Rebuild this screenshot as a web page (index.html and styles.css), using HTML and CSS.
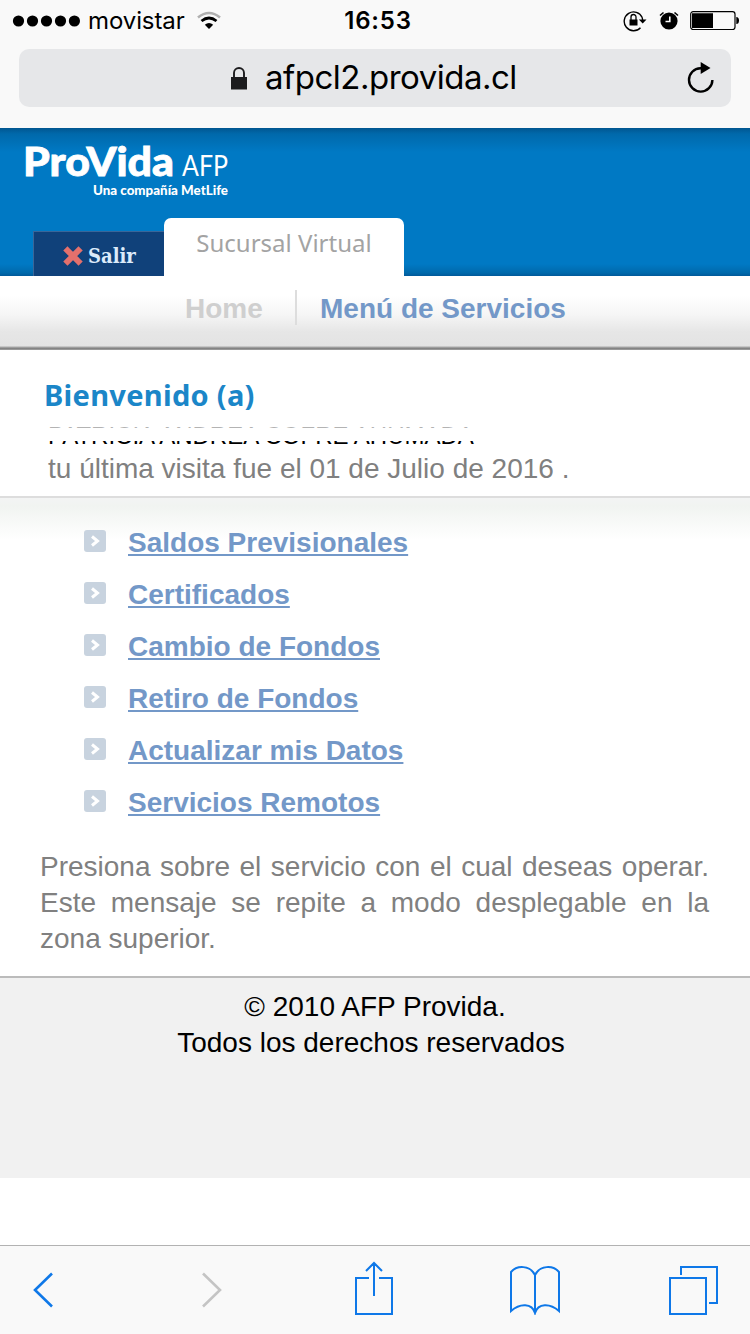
FILE: index.html
```html
<!DOCTYPE html>
<html lang="es">

<head>
    <meta charset="UTF-8">
    <meta name="viewport" content="width=device-width, initial-scale=1.0">
    <title>AFP Provida</title>
    <link rel="stylesheet" href="styles.css">
</head>

<body>

    <div class="browser-top">
        <div class="status-bar">
            <div class="status-left">
                <svg width="68" height="12" viewBox="0 0 68 12">
                    <circle cx="6.500" cy="6" r="5.600"/><circle cx="20.500" cy="6" r="5.600"/><circle cx="34.500" cy="6" r="5.600"/><circle cx="48.500" cy="6" r="5.600"/><circle cx="62.400" cy="6" r="5.600"/>
                </svg>
                <span class="carrier">movistar</span>
                <svg class="wifi" width="24" height="19" viewBox="0 0 24 19">
                    <path d="M1 6.500Q12-2.500 23 6.500" fill="none" stroke="#b0b0b0" stroke-width="2.600"/>
                    <path d="M4.500 10Q12 4 19.500 10" fill="none" stroke="#000" stroke-width="2.800"/>
                    <path d="M7.800 13.800Q12 10.200 16.200 13.800L12 18Z"/>
                </svg>
            </div>
            <div class="status-time">16:53</div>
            <div class="status-right">
                <svg width="25" height="22" viewBox="0 0 25 22">
                    <path d="M19.200 7.500A9.400 9.400 0 1 0 17.500 17.700M19.200 7.500L19.800 11" fill="none" stroke="#000" stroke-width="1.400"/>
                    <path d="M15.800 9.500H23.500L19.700 13.500ZM6.500 9.500H14.500V15.500H6.500Z"/>
                    <path d="M8 10V7A2.500 2.500 0 0 1 13 7V10" fill="none" stroke="#000" stroke-width="1.300"/>
                </svg>
                <svg width="20" height="20" viewBox="0 0 20 20">
                    <circle cx="10" cy="10" r="8.600"/>
                    <path d="M1 4.500L4.500 1.500M19 4.500L15.500 1.500" stroke="#000" stroke-width="1.600"/>
                    <path d="M10.800 5.500V10.500H6.500" fill="none" stroke="#fff" stroke-width="1.600"/>
                </svg>
                <svg width="50" height="20" viewBox="0 0 50 20">
                    <rect x="0.700" y="0.700" width="44.300" height="17.800" rx="2.500" fill="none" stroke="#000" stroke-width="1.200"/>
                    <path d="M2 2.200H23V17H2ZM46.300 6Q49 6 49 9.500Q49 13 46.300 13Z"/>
                </svg>
            </div>
        </div>
        <div class="address-bar">
            <svg class="lock" width="16" height="23" viewBox="0 0 16 23">
                <path d="M0 10H16V22.500H0Z" fill="#1c1c1e"/>
                <path d="M3 11V6A5 5 0 0 1 13 6V11" fill="none" stroke="#1c1c1e" stroke-width="1.900"/>
            </svg>
            <span class="url">afpcl2.provida.cl</span>
            <svg class="reload" width="28" height="32" viewBox="0 0 28 32">
                <path d="M17 6.200H13.500A11.700 11.700 0 1 0 25.400 18" fill="none" stroke="#000" stroke-width="2.400"/>
                <path d="M13.700 0L23.500 6L13.700 12Z"/>
            </svg>
        </div>
    </div>

    <header class="site-header">
        <svg class="logo" width="210" height="60" viewBox="0 0 210 60">
            <text class="logo-name" x="-1" y="36" textLength="151" lengthAdjust="spacingAndGlyphs">ProVida</text>
            <text class="logo-afp" x="158" y="36" textLength="46" lengthAdjust="spacingAndGlyphs">AFP</text>
            <text class="logo-sub" x="69" y="55" textLength="135" lengthAdjust="spacingAndGlyphs">Una compañía MetLife</text>
        </svg>
        <div class="tabs">
            <a class="tab-exit">
                <svg width="20" height="20" viewBox="0 0 20 20">
                    <path d="M4.500 4.500L15.500 15.500M15.500 4.500L4.500 15.500" stroke="#e4706c" stroke-width="6" stroke-linecap="square"/>
                </svg>
                <span>Salir</span>
            </a>
            <a class="tab-active">Sucursal Virtual</a>
        </div>
    </header>

    <nav class="menu">
        <span class="menu-home">Home</span>
        <span class="menu-services">Menú de Servicios</span>
    </nav>

    <section class="welcome">
        <h1>Bienvenido (a)</h1>
        <div class="name">PATRICIA ANDREA COFRE AHUMADA</div>
        <p>tu última visita fue el 01 de Julio de 2016 .</p>
    </section>

    <main class="content">
        <ul class="services">
            <li><svg viewBox="0 0 22 22"><rect width="22" height="22" rx="3"/><path d="M8 6.500L13.500 11L8 15.500"/></svg><a>Saldos Previsionales</a></li>
            <li><svg viewBox="0 0 22 22"><rect width="22" height="22" rx="3"/><path d="M8 6.500L13.500 11L8 15.500"/></svg><a>Certificados</a></li>
            <li><svg viewBox="0 0 22 22"><rect width="22" height="22" rx="3"/><path d="M8 6.500L13.500 11L8 15.500"/></svg><a>Cambio de Fondos</a></li>
            <li><svg viewBox="0 0 22 22"><rect width="22" height="22" rx="3"/><path d="M8 6.500L13.500 11L8 15.500"/></svg><a>Retiro de Fondos</a></li>
            <li><svg viewBox="0 0 22 22"><rect width="22" height="22" rx="3"/><path d="M8 6.500L13.500 11L8 15.500"/></svg><a>Actualizar mis Datos</a></li>
            <li><svg viewBox="0 0 22 22"><rect width="22" height="22" rx="3"/><path d="M8 6.500L13.500 11L8 15.500"/></svg><a>Servicios Remotos</a></li>
        </ul>
        <p class="help">Presiona sobre el servicio con el cual deseas operar. Este mensaje se repite a modo desplegable en la zona superior.</p>
    </main>

    <footer class="site-footer">
        <div>© 2010 AFP Provida.</div>
        <div class="rights">Todos los derechos reservados</div>
    </footer>

    <div class="toolbar">
        <svg class="back" width="20" height="36" viewBox="0 0 20 36"><path d="M19 1.500L2 18L19 34.500"/></svg>
        <svg class="forward" width="20" height="36" viewBox="0 0 20 36"><path d="M1 1.500L18 18L1 34.500"/></svg>
        <svg class="share" width="40" height="54" viewBox="0 0 40 54"><path d="M15 17H2V53H38V17H25M20 35V2.500M12 10L20 2L28 10"/></svg>
        <svg class="bookmarks" width="50" height="50" viewBox="0 0 50 50"><path d="M25 47V10C20 0 7 0 1 7V46C10 38 22 38 25 48C28 38 40 38 49 46V7C43 0 30 0 25 10"/></svg>
        <svg class="pages" width="50" height="50" viewBox="0 0 50 50"><path d="M1 13H37V49H1ZM12 10V2H48V38H40"/></svg>
    </div>

</body>

</html>
```
FILE: styles.css
```css
* {
    box-sizing: border-box;
}

body {
    margin: 0;
    height: 1334px;
    display: flex;
    flex-direction: column;
    background-color: #fff;
    font-family: "Liberation Sans", Arial, sans-serif;
    font-size: 28px;
    overflow: hidden;
}

svg {
    display: block;
    flex-shrink: 0;
}

h1, p, ul {
    margin: 0;
    padding: 0;
}

.browser-top {
    height: 128px;
    background-color: #f9f9f9;
    padding: 0 19px;
}

.status-bar {
    height: 49px;
    padding-bottom: 8px;
    margin: 0 -13px 0 -7px;
    display: grid;
    grid-template-columns: 1fr auto 1fr;
    align-items: center;
    font-family: Inter, sans-serif;
    font-size: 24px;
}

.status-left {
    display: flex;
    align-items: center;
}

.carrier {
    margin: 0 12px 0 8px;
    letter-spacing: -0.1px;
}

.status-time {
    font-weight: 600;
    letter-spacing: 0.8px;
}

.status-right {
    display: flex;
    justify-content: flex-end;
    align-items: center;
    gap: 11px;
    margin-right: 4px;
}

.address-bar {
    height: 58px;
    border-radius: 10px;
    background-color: #e6e7e9;
    display: flex;
    align-items: center;
    padding: 0 16px 0 212px;
    font-family: Inter, sans-serif;
    font-size: 33px;
}

.url {
    margin-left: 18px;
    line-height: 54px;
    padding-bottom: 3px;
    letter-spacing: -0.5px;
}

.reload {
    margin-left: auto;
}

.site-header {
    height: 148px;
    padding: 12px 0 0 24px;
    background: linear-gradient(#015690, #0069ab 6px, #0079c4 24px, #0079c4 136px, #0069ab 145px, #01599a);
}

.logo {
    margin-bottom: 18px;
    overflow: visible;
}

.logo text {
    fill: #fff;
}

.logo .logo-name {
    font: 900 39px Lato, sans-serif;
    stroke: #fff;
    stroke-width: 0.8px;
}

.logo .logo-afp {
    font: 400 28px Lato, sans-serif;
}

.logo .logo-sub {
    font: 900 13px Lato, sans-serif;
}

.tabs {
    display: flex;
    align-items: flex-end;
    padding-left: 9px;
}

.tab-exit {
    width: 131px;
    height: 45px;
    padding: 3px 0 0 29px;
    display: flex;
    align-items: center;
    gap: 5px;
    background-color: #10417a;
    border-top: 1px solid #3a6699;
    border-left: 1px solid #3a6699;
    color: #dcebfa;
    font: bold 20px "DejaVu Serif Condensed", "DejaVu Serif", serif;
}

.tab-active {
    width: 240px;
    height: 58px;
    border-radius: 7px 7px 0 0;
    background-color: #fff;
    color: #a3a3a3;
    font: 24px/49px "Noto Sans", sans-serif;
    text-align: center;
}

.menu {
    height: 74px;
    display: flex;
    padding: 14px 0 0 185px;
    font-weight: bold;
    line-height: 37px;
    background: linear-gradient(#fff 20px, #f6f6f6 38px, #e6e6e6 56px, #e3e3e3 70px, #aaa 71px, #777 73px, #bbb);
}

.menu-home {
    width: 112px;
    height: 35px;
    border-right: 2px solid #ddd;
    color: #cfcfcf;
}

.menu-services {
    padding-left: 23px;
    color: #7398c8;
}

.welcome {
    height: 146px;
    padding: 27px 0 0 48px;
    color: #808080;
}

.welcome h1 {
    margin-left: -4px;
    height: 45px;
    color: #1b86c8;
    font: bold 29px/36px "Noto Sans", sans-serif;
    letter-spacing: 0.3px;
}

/* white band hides the middle of the name */
.name {
    position: relative;
    height: 28px;
    color: #000;
    font-size: 24px;
    line-height: 28px;
    white-space: nowrap;
}

.name::after {
    content: "";
    position: absolute;
    top: 2px;
    left: 0;
    right: 0;
    height: 17px;
    background: linear-gradient(rgba(255, 255, 255, 0.7) 4px, #fff 4px);
}

.welcome p {
    margin-top: 1px;
    line-height: 36px;
}

.content {
    height: 480px;
    border-top: 2px solid #ddd;
    background: linear-gradient(#f3f4f4, #f1f4f1 8px, #fff 42px);
}

.services {
    list-style: none;
    padding: 20px 0 0 84px;
}

.services li {
    height: 52px;
    display: flex;
    gap: 22px;
}

.services svg {
    width: 22px;
    height: 22px;
    margin-top: 12px;
}

.services rect {
    fill: #c8d3df;
}

.services path {
    fill: none;
    stroke: #fff;
    stroke-width: 3;
}

.services a {
    line-height: 50px;
    font-weight: bold;
    color: #7398c8;
    text-decoration: underline;
    text-decoration-thickness: 2px;
    text-underline-offset: 2px;
}

.help {
    padding: 19px 41px 0 40px;
    color: #808080;
    line-height: 36px;
    text-align: justify;
}

.site-footer {
    height: 202px;
    padding-top: 11px;
    background-color: #f1f1f1;
    border-top: 2px solid #bbb;
    text-align: center;
    line-height: 36px;
}

.rights {
    margin-right: 8px;
}

.toolbar {
    height: 89px;
    margin-top: auto;
    padding-left: 33px;
    display: flex;
    align-items: center;
    background-color: #f9f9f9;
    border-top: 1px solid #b2b2b2;
}

.toolbar path {
    fill: none;
    stroke: #0f78e8;
    stroke-width: 2;
}

.toolbar .back path,
.toolbar .forward path {
    stroke-width: 2.6;
}

.toolbar .forward {
    margin-left: 149px;
}

.toolbar .forward path {
    stroke: #c4c4c4;
}

.toolbar .share {
    margin: 0 0 4px 132px;
}

.toolbar .bookmarks {
    margin-left: 116px;
}

.toolbar .pages {
    margin-left: 109px;
}
```
